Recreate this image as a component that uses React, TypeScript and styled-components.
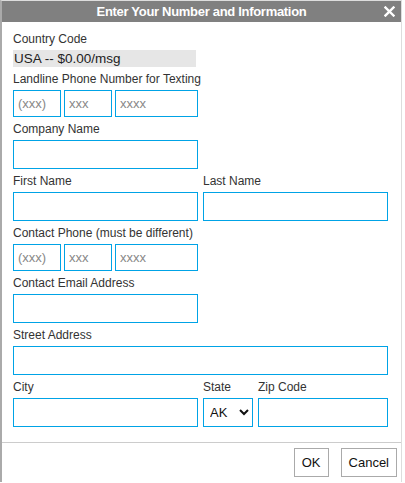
import styled, { createGlobalStyle } from "styled-components";

const GlobalStyle = createGlobalStyle`
  html, body {
    margin: 0;
    padding: 0;
    background: #fff;
    font-family: "Liberation Sans", Arial, sans-serif;
  }
`;

const Dialog = styled.div`
  width: 399px;
  border-top: 1px solid #ddd;
  border-left: 2px solid #aaa;
  border-right: 1px solid #ddd;
  background: #fff;
`;

const TitleBar = styled.div`
  position: relative;
  height: 21px;
  background: #808080;
  color: #fff;
  font-size: 13px;
  font-weight: bold;
  letter-spacing: -0.3px;
  line-height: 21px;
  text-align: center;
`;

const Close = styled.button`
  position: absolute;
  right: 6px;
  top: 5px;
  width: 11px;
  height: 11px;
  padding: 0;
  border: none;
  background: transparent;
  display: flex;
  cursor: pointer;
`;

const Body = styled.div`
  padding: 10px 13px 15px 11px;
`;

const Label = styled.div`
  font-size: 12px;
  line-height: 14px;
  color: #333;
  margin: 5px 0 4px;
  white-space: nowrap;
`;

const FirstLabel = styled(Label)`
  margin-top: 0;
`;

const CountryBox = styled.div`
  width: 182px;
  height: 17px;
  padding-left: 1px;
  background: #e6e6e6;
  color: #222;
  font-size: 13.5px;
  line-height: 17px;
`;

const Row = styled.div<{ $cols: string; $gap: number }>`
  display: grid;
  grid-template-columns: ${(p) => p.$cols};
  column-gap: ${(p) => p.$gap}px;
`;

const Input = styled.input<{ $w?: number; $h?: number }>`
  box-sizing: border-box;
  display: block;
  width: ${(p) => (p.$w ? `${p.$w}px` : "100%")};
  height: ${(p) => p.$h ?? 29}px;
  margin: 0;
  padding: 0 4px;
  border: 1px solid #00a3e6;
  border-radius: 0;
  outline: none;
  background: #fff;
  font-family: "Liberation Sans", Arial, sans-serif;
  font-size: 13px;
  color: #222;
  &::placeholder {
    color: #888;
  }
`;

const Select = styled.select`
  box-sizing: border-box;
  display: block;
  width: 100%;
  height: 29px;
  margin: 0;
  padding: 0 2px;
  border: 1px solid #00a3e6;
  border-radius: 0;
  outline: none;
  background: #fff;
  font-family: "Liberation Sans", Arial, sans-serif;
  font-size: 13px;
  color: #111;
`;

const Footer = styled.div`
  display: flex;
  justify-content: flex-end;
  gap: 12px;
  padding: 5px 4px 5px 0;
  border-top: 1px solid #ccc;
`;

const Button = styled.button`
  height: 29px;
  padding: 0 7px;
  background: #fff;
  border: 1px solid #aaa;
  border-radius: 0;
  font-family: "Liberation Sans", Arial, sans-serif;
  font-size: 13px;
  color: #111;
  cursor: pointer;
`;

const PhoneRow = ({ label }: { label: string }) => (
  <>
    <Label>{label}</Label>
    <Row $cols="48px 48px 83px" $gap={3}>
      <Input $h={27} placeholder="(xxx)" />
      <Input $h={27} placeholder="xxx" />
      <Input $h={27} placeholder="xxxx" />
    </Row>
  </>
);

export default function App() {
  return (
    <>
      <GlobalStyle />
      <Dialog>
        <TitleBar>
          Enter Your Number and Information
          <Close aria-label="close">
            <svg width="11" height="11" viewBox="0 0 11 11">
              <path d="M1.5 1.5 L9.5 9.5 M9.5 1.5 L1.5 9.5" stroke="#fff" strokeWidth="2.4" strokeLinecap="square" />
            </svg>
          </Close>
        </TitleBar>
        <Body>
          <FirstLabel>Country Code</FirstLabel>
          <CountryBox>USA -- $0.00/msg</CountryBox>

          <PhoneRow label="Landline Phone Number for Texting" />

          <Label>Company Name</Label>
          <Input $w={185} />

          <Row $cols="185px 185px" $gap={5}>
            <div>
              <Label>First Name</Label>
              <Input />
            </div>
            <div>
              <Label>Last Name</Label>
              <Input />
            </div>
          </Row>

          <PhoneRow label="Contact Phone (must be different)" />

          <Label>Contact Email Address</Label>
          <Input $w={185} />

          <Label>Street Address</Label>
          <Input $w={375} />

          <Row $cols="185px 50px 130px" $gap={5}>
            <div>
              <Label>City</Label>
              <Input />
            </div>
            <div>
              <Label>State</Label>
              <Select defaultValue="AK">
                <option>AK</option>
                <option>AL</option>
                <option>AR</option>
                <option>AZ</option>
                <option>CA</option>
              </Select>
            </div>
            <div>
              <Label>Zip Code</Label>
              <Input />
            </div>
          </Row>
        </Body>
        <Footer>
          <Button>OK</Button>
          <Button>Cancel</Button>
        </Footer>
      </Dialog>
    </>
  );
}
